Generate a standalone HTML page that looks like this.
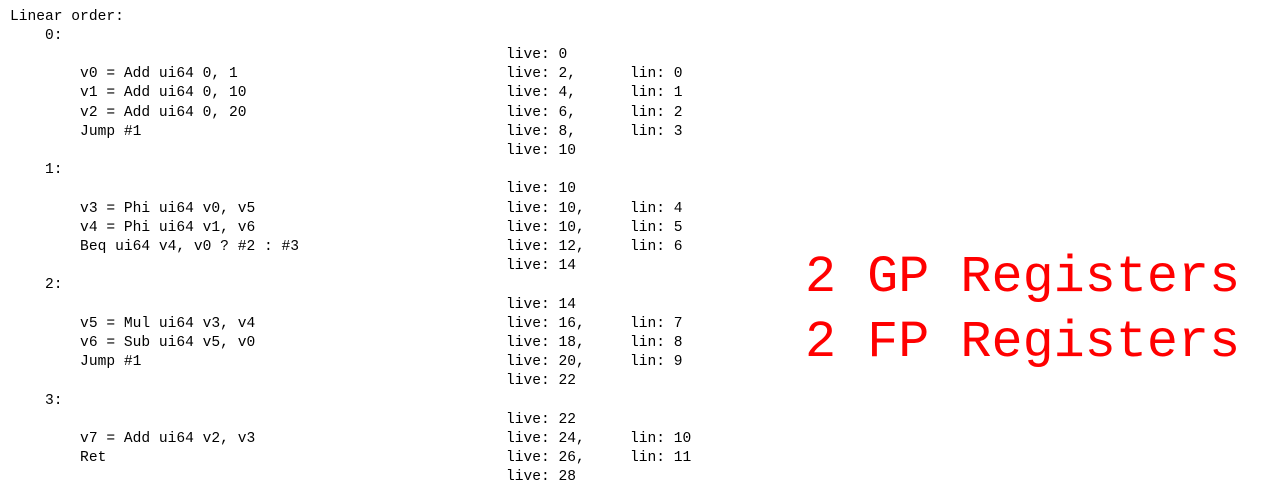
<!DOCTYPE html>
<html><head><style>
body{margin:0;background:#fff;width:1280px;height:495px;overflow:hidden;position:relative}
pre{position:absolute;margin:0;font-family:"Liberation Mono",monospace;font-size:14.6px;line-height:19.2px;color:#000;top:7.5px}
.r{position:absolute;left:805px;font-family:"Liberation Mono",monospace;font-size:51.8px;color:#f00;line-height:65px;top:245px;margin:0;white-space:pre}
</style></head><body>
<pre style="left:10px">Linear order:
    0:

        v0 = Add ui64 0, 1
        v1 = Add ui64 0, 10
        v2 = Add ui64 0, 20
        Jump #1

    1:

        v3 = Phi ui64 v0, v5
        v4 = Phi ui64 v1, v6
        Beq ui64 v4, v0 ? #2 : #3

    2:

        v5 = Mul ui64 v3, v4
        v6 = Sub ui64 v5, v0
        Jump #1

    3:

        v7 = Add ui64 v2, v3
        Ret
</pre>
<pre style="left:506px">


live: 0
live: 2,
live: 4,
live: 6,
live: 8,
live: 10

live: 10
live: 10,
live: 10,
live: 12,
live: 14

live: 14
live: 16,
live: 18,
live: 20,
live: 22

live: 22
live: 24,
live: 26,
live: 28</pre>
<pre style="left:630px">



lin: 0
lin: 1
lin: 2
lin: 3



lin: 4
lin: 5
lin: 6



lin: 7
lin: 8
lin: 9



lin: 10
lin: 11
</pre>
<div class="r">2 GP Registers
2 FP Registers</div>
</body></html>
